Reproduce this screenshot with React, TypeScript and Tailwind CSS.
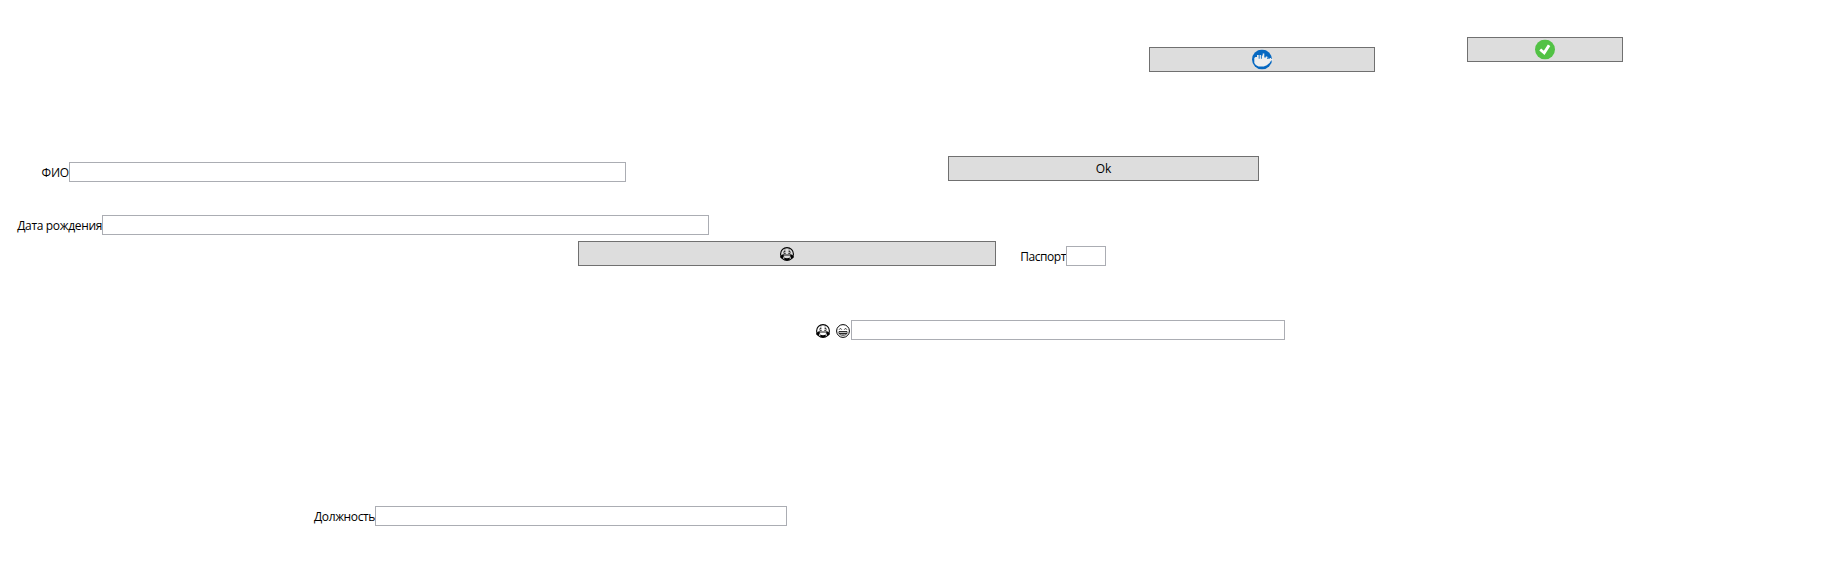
import type { ReactNode } from 'react';

function Field({ label, labelClass, inputClass }: { label: ReactNode; labelClass: string; inputClass: string }) {
  return (
    <label className="flex h-5">
      <span className={`flex h-5 shrink-0 justify-end whitespace-nowrap pt-[3px] leading-4 ${labelClass}`}>{label}</span>
      <input type="text" className={`h-5 border border-[#abadb3] bg-white px-0.5 outline-none ${inputClass}`} />
    </label>
  );
}

function Button({ children, className }: { children: ReactNode; className: string }) {
  return (
    <button className={`flex h-[25px] shrink-0 items-center justify-center border border-[#707070] bg-[#dddddd] ${className}`}>
      {children}
    </button>
  );
}

function LaughTears() {
  return (
    <svg width="14" height="14" viewBox="0 0 14 14" fill="none" stroke="#000" className="shrink-0">
      <circle cx="7" cy="7" r="6.400" strokeWidth="1.100" />
      <path d="M3.300 5.200 5.500 4.200M3.700 6.300h2M10.700 5.200 8.500 4.200M10.300 6.300h-2M4.400 3.200l.8-.4M9.600 3.200l-.8-.4" strokeWidth=".9" />
      <path d="M3.500 8h7" strokeWidth=".9" />
      <path d="M4 10.400c1.800 1 4.200 1 6 0L9.400 13H4.600Z" fill="#000" stroke="none" />
      <path d="M3.500 7.500C2.200 7.600.3 8.700.5 10.200c.3 1.400 2.700 1.300 3.100-.6ZM10.500 7.500c1.300.1 3.200 1.200 3 2.700-.3 1.400-2.700 1.300-3.100-.6Z" fill="#000" strokeWidth=".5" />
    </svg>
  );
}

function Beaming() {
  return (
    <svg width="14" height="14" viewBox="0 0 14 14" fill="none" stroke="#000" className="shrink-0">
      <circle cx="7" cy="7" r="6.400" strokeWidth="1" />
      <path d="M3.200 5.600c.5-1.300 2-1.300 2.500 0M8.300 5.600c.5-1.300 2-1.300 2.500 0" strokeWidth=".8" />
      <path d="M3 7.500h8v1.500c0 3-8 3-8 0ZM3.200 9.500h7.600" strokeWidth=".8" />
      <path d="M5 7.500v3M7 7.500v3.500M9 7.500v3" strokeWidth=".5" />
    </svg>
  );
}

function Whale() {
  return (
    <svg width="21" height="20" viewBox="0 0 21 20" className="shrink-0 -translate-y-[0.5px]">
      <circle cx="10" cy="10" r="10" fill="#0668c1" />
      <path
        d="M2.300 12V8.500L3.500 7.600H5V5.500h1.700v3.800h.9V5.500h1.300v3.800h.9V6h.9V4h1.600v4h1.500V7h1.500v1h1v1.200h1.500v-.7h1l.7 1.100h1.300v1.300h-1.700v1h-1.200v1.400l-1.300 1-1.800 1.400-3 1.300H6.500l-2.700-1.500-1.500-2Z"
        fill="#eee"
      />
      <path d="M15 8.200h1.300v1H15z" fill="#0668c1" />
    </svg>
  );
}

function Check() {
  return (
    <svg width="20" height="20" viewBox="0 0 20 20" className="shrink-0 -translate-y-[0.5px]">
      <circle cx="10" cy="10" r="10" fill="#52c245" />
      <path d="m5.200 10 4 3.300 4.900-7.600" fill="none" stroke="#fff" strokeWidth="2.900" />
    </svg>
  );
}

export default function App() {
  return (
    <main className="flex h-[571px] w-[1842px] flex-col overflow-hidden bg-white pt-[37px] font-['Open_Sans',sans-serif] text-[12px] text-black">
      <div className="flex h-[35px] items-start pl-[1149px]">
        <Button className="mt-2.5 w-[226px]"><Whale /></Button>
        <Button className="ml-[92px] w-[156px]"><Check /></Button>
      </div>
      <div className="mt-[84px] flex h-[26px] items-start">
        <div className="mt-1.5">
          <Field label="ФИО" labelClass="w-[69px] tracking-[-0.2px]" inputClass="w-[557px]" />
        </div>
        <Button className="ml-[322px] w-[311px]"><span className="pt-px">Ok</span></Button>
      </div>
      <div className="mt-[33px]">
        <Field label="Дата рождения" labelClass="w-[102px] tracking-[-0.34px]" inputClass="w-[607px]" />
      </div>
      <div className="mt-1.5 flex h-[25px] items-end pl-[578px]">
        <Button className="w-[418px]"><LaughTears /></Button>
        <Field label="Паспорт" labelClass="w-[70px] tracking-[-0.42px]" inputClass="w-10" />
      </div>
      <div className="mt-[54px]">
        <Field
          label={<span className="flex gap-1.5 pt-px"><LaughTears /><Beaming /></span>}
          labelClass="w-[851px] pr-px"
          inputClass="w-[434px]"
        />
      </div>
      <div className="mt-[166px]">
        <Field label="Должность" labelClass="w-[375px] tracking-[-0.38px]" inputClass="w-[412px]" />
      </div>
    </main>
  );
}
